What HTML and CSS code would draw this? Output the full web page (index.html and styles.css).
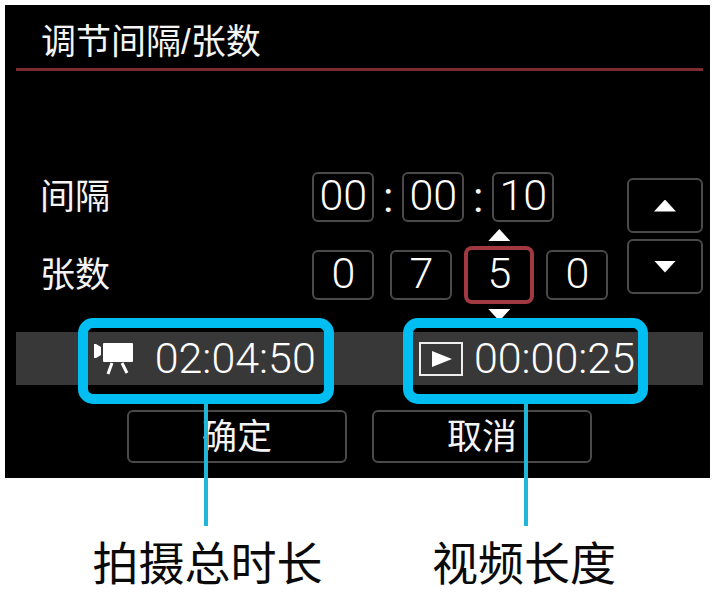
FILE: index.html
```
<!doctype html>
<html lang="zh-CN">
<head>
    <meta charset="UTF-8">
    <meta name="viewport" content="width=device-width, initial-scale=1.0">
    <title>调节间隔/张数</title>
    <link rel="stylesheet" href="styles.css">
</head>
<body>
<form class="screen">
    <h1 class="title">调节间隔/张数</h1>

    <div class="settings">
        <div class="fields">
            <div class="row">
                <label for="hour">间隔</label>
                <input type="text" id="hour" value="00">
                <span class="colon">:</span>
                <input type="text" aria-label="分" value="00">
                <span class="colon">:</span>
                <input type="text" aria-label="秒" value="10">
            </div>
            <div class="row row-count">
                <label for="count">张数</label>
                <input type="text" id="count" value="0">
                <input type="text" aria-label="百位" value="7">
                <span class="selected">
                    <input type="text" aria-label="十位" value="5">
                </span>
                <input type="text" aria-label="个位" value="0">
            </div>
        </div>
        <div class="stepper">
            <button type="button" aria-label="增加"><i class="up"></i></button>
            <button type="button" aria-label="减少"><i class="down"></i></button>
        </div>
    </div>

    <div class="bar columns">
        <div class="readout total">
            <svg width="39" height="32" viewBox="0 0 39 32">
                <path d="M0 1h2l5 3v8l-5 3H0z" fill="#fff"/>
                <rect x="9" y="0" width="30" height="19" rx="1" fill="#fff"/>
                <path d="M18 20l-4 11M28 20l5 10" stroke="#fff" stroke-width="3" fill="none"/>
            </svg>
            <time>02:04:50</time>
        </div>
        <div class="readout length">
            <svg width="44" height="34" viewBox="0 0 44 34">
                <rect x="1" y="1" width="42" height="32" fill="none" stroke="#eee" stroke-width="2"/>
                <path d="M13 9l20 8-20 8z" fill="#fff"/>
            </svg>
            <time>00:00:25</time>
        </div>
    </div>

    <div class="actions">
        <button type="submit">确定</button>
        <button type="button">取消</button>
    </div>
</form>

<div class="captions columns">
    <p class="total">拍摄总时长</p>
    <p class="length">视频长度</p>
</div>
</body>
</html>
```
FILE: styles.css
```
* {
    margin: 0;
    padding: 0;
    box-sizing: border-box;
}

body {
    padding: 5px;
    background: #fff;
    font-family: "Liberation Sans", "Noto Sans CJK SC", sans-serif;
}

.screen {
    padding: 0 7px 15px 11px;
    background: #000;
    color: #f4f4f4;
    font-size: 35px;
}

.title {
    height: 66px;
    padding-left: 25px;
    border-bottom: 3px solid #7c2c30;
    font-size: 35px;
    font-weight: 400;
    line-height: 74px;
}

.settings {
    display: flex;
    align-items: center;
    margin-top: 101px;
}

.fields {
    flex: 1;
}

.row {
    display: flex;
    align-items: center;
}

.row-count {
    gap: 16px;
    margin-top: 28px;
}

.row label {
    width: 48.5%;
    padding-left: 24px;
    line-height: 50px;
}

.row-count label {
    margin-right: -16px;
}

.row input {
    display: block;
    width: 62px;
    height: 50px;
    padding-bottom: 4px;
    border: 2px solid #4a4a4a;
    border-radius: 6px;
    background: #000;
    color: #fff;
    font-family: Roboto, "Liberation Sans", sans-serif;
    font-size: 43px;
    font-weight: 300;
    text-align: center;
}

.colon {
    width: 28px;
    font-family: Roboto, "Liberation Sans", sans-serif;
    font-size: 43px;
    line-height: 50px;
    text-align: center;
}

.selected {
    position: relative;
}

.row .selected input {
    border-color: #000;
    border-radius: 4px;
    box-shadow: 0 0 0 4px #a03a40;
}

.up,
.down,
.selected::before,
.selected::after {
    display: block;
    width: 22px;
    height: 12px;
    background: #fff;
}

.up,
.selected::before {
    clip-path: polygon(50% 0, 100% 100%, 0 100%);
}

.down,
.selected::after {
    clip-path: polygon(0 0, 100% 0, 50% 100%);
}

.selected::before,
.selected::after {
    content: "";
    position: absolute;
    left: 20px;
}

.selected::before {
    top: -21px;
}

.selected::after {
    bottom: -21px;
}

.stepper {
    display: flex;
    flex-direction: column;
    gap: 6px;
}

button {
    display: flex;
    align-items: center;
    justify-content: center;
    border: 2px solid #4a4a4a;
    border-radius: 6px;
    background: #000;
    color: #f4f4f4;
    font: inherit;
}

.stepper button {
    width: 76px;
    height: 55px;
}

/* 两列读数和下方说明共用 */
.columns {
    display: flex;
    justify-content: space-between;
    padding: 0 8% 0 9%;
}

.total {
    width: 256px;
}

.length {
    width: 245px;
}

.bar {
    height: 53px;
    margin-top: 32px;
    background: #383838;
}

.readout {
    position: relative;
    display: flex;
    align-items: center;
    justify-content: space-between;
    padding: 0 18px 0 16px;
    color: #fff;
    font-family: Roboto, "Liberation Sans", sans-serif;
    font-size: 43px;
    font-weight: 300;
    line-height: 53px;
}

.readout.length {
    padding-right: 13px;
}

/* 蓝色标注框 */
.readout::before {
    content: "";
    position: absolute;
    z-index: 1;
    top: -14px;
    right: 0;
    bottom: -19px;
    left: 0;
    border: 10px solid #00bdf2;
    border-radius: 15px;
}

/* 引线 */
.readout::after {
    content: "";
    position: absolute;
    z-index: 1;
    top: 72px;
    left: 50%;
    width: 4px;
    height: 122px;
    margin-left: -2px;
    background: #1fb6d9;
}

.actions {
    display: flex;
    justify-content: center;
    gap: 25px;
    margin-top: 25px;
}

.actions button {
    width: 220px;
    height: 53px;
    padding-bottom: 6px;
}

.captions {
    margin: 56px 7px 0 11px;
    color: #0a0a0a;
    font-size: 46px;
    line-height: 60px;
    text-align: center;
    white-space: nowrap;
}
```
